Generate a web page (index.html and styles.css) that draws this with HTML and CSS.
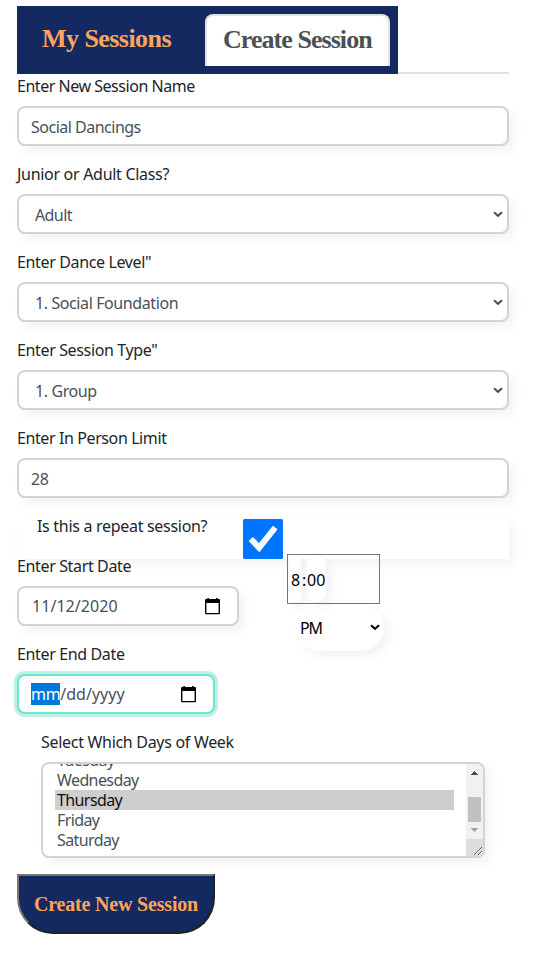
FILE: index.html
```html
<!DOCTYPE html>
<html lang="en">
<head>
<meta charset="utf-8">
<title>Create Session</title>
<link rel="stylesheet" href="styles.css">
</head>
<body>
<nav class="tabs">
  <div class="tab-bar">
    <a class="tab"><span class="tab-text-my">My Sessions</span></a>
    <a class="tab active"><span class="tab-text-create">Create Session</span></a>
  </div>
</nav>
<form>
  <div class="group"><label class="l-name">Enter New Session Name</label><div class="control"><span class="v-name">Social Dancings</span></div></div>
  <div class="group"><label class="l-class">Junior or Adult Class?</label><div class="control select"><span class="v-adult">Adult</span><svg class="chevron" viewBox="0 0 10 7"><path d="M1 1.2 5 4.8 9 1.2"/></svg></div></div>
  <div class="group"><label class="l-level">Enter Dance Level"</label><div class="control select"><span class="v-level">1. Social Foundation</span><svg class="chevron" viewBox="0 0 10 7"><path d="M1 1.2 5 4.8 9 1.2"/></svg></div></div>
  <div class="group"><label class="l-type">Enter Session Type"</label><div class="control select"><span class="v-group">1. Group</span><svg class="chevron" viewBox="0 0 10 7"><path d="M1 1.2 5 4.8 9 1.2"/></svg></div></div>
  <div class="group"><label class="l-limit">Enter In Person Limit</label><div class="control"><span class="v-limit">28</span></div></div>
  <div class="repeat">
    <label class="l-repeat">Is this a repeat session?</label>
    <div class="check-strip"><svg class="checkbox" viewBox="0 0 40 40"><rect width="40" height="40" rx="1.5" fill="#0075ff"/><path d="M7.8 20 16.2 28.7 32.2 8.5" fill="none" stroke="#fff" stroke-width="6"/></svg></div>
  </div>
  <div class="schedule">
    <div class="dates">
      <div class="group"><label class="l-start">Enter Start Date</label><div class="control date start"><span class="v-start">11/12/2020</span><svg class="calendar" viewBox="0 0 16 18"><path fill="#000" fill-rule="evenodd" d="M2.3 1h1.6v1h7.2V1h1.6v1H14q1 0 1 1v13q0 1.3-1 1.3H1q-1 0-1-1.3V3q0-1 1-1h1.3zM1.4 6v9.9h12.2V6z"/></svg></div></div>
      <div class="group"><label class="l-end">Enter End Date</label><div class="control date end"><span class="v-end"><mark>mm</mark>/dd/yyyy</span><svg class="calendar" viewBox="0 0 16 18"><path fill="#000" fill-rule="evenodd" d="M2.3 1h1.6v1h7.2V1h1.6v1H14q1 0 1 1v13q0 1.3-1 1.3H1q-1 0-1-1.3V3q0-1 1-1h1.3zM1.4 6v9.9h12.2V6z"/></svg></div></div>
    </div>
    <div class="time">
      <div class="clock"><span class="hour">8</span><span class="colon">:</span><span class="minute">00</span></div>
      <div class="meridiem"><span>PM</span><svg class="chevron" viewBox="0 0 10 7"><path d="M1 1.2 5 4.8 9 1.2"/></svg></div>
    </div>
  </div>
  <div class="days">
    <label class="l-days">Select Which Days of Week</label>
    <div class="listbox">
      <ul class="options">
        <li class="d-tue">Tuesday</li><li class="d-wed">Wednesday</li><li class="d-thu selected">Thursday</li><li class="d-fri">Friday</li><li class="d-sat">Saturday</li>
      </ul>
      <div class="scrollbar">
        <svg class="arrow up" viewBox="0 0 7 4"><path fill="#505050" d="M3 0h1v1h1v1h1v1h1v1H0V3h1V2h1V1h1z"/></svg>
        <div class="thumb"></div>
        <svg class="arrow down" viewBox="0 0 7 4"><path fill="#a3a3a3" d="M0 0h7v1H6v1H5v1H4v1H3V3H2V2H1V1H0z"/></svg>
        <svg class="resizer" viewBox="0 0 17 17"><path d="M8 16 16 8M12 16 16 12" stroke="#555" stroke-width="1"/><path d="M9 16 16 9M13 16 16 13" stroke="#fff" stroke-width=".8"/></svg>
      </div>
    </div>
  </div>
  <button class="submit" type="button"><span class="submit-text">Create New Session</span></button>
</form>
</body>
</html>
```
FILE: styles.css
```css
* { box-sizing: border-box; }
body {
  margin: 0;
  padding: 6px 25px 0 17px;
  background: #fff;
  color: #212529;
  font: 16px/24px "Noto Sans", sans-serif;
  letter-spacing: -.3px;
}
.tabs { display: flex; height: 68px; align-items: stretch; background: linear-gradient(#dee2e6, #dee2e6) 0 66px / 100% 2px no-repeat; }
.tab-bar { display: flex; width: 381px; padding: 8px; background: #14295f; }
.tab {
  display: flex; align-items: center;
  width: 180px; height: 52px; padding: 0 0 2px 17px;
  color: #ffa45c; white-space: nowrap;
  font: bold 26px/30px "Liberation Serif", serif;
  letter-spacing: -.55px;
}
.tab.active { width: 185px; padding-left: 16px; color: #495057; background: #fff; border: 2px solid #dee2e6; border-bottom: 0; border-radius: 8px 8px 0 0; letter-spacing: -.95px; }
.group { margin-bottom: 16px; }
label { display: block; width: max-content; margin-bottom: 8px; white-space: nowrap; }
.l-name { letter-spacing: -.47px; }
.l-level, .l-type, .l-start, .l-end { letter-spacing: -.36px; }
.l-limit { letter-spacing: -.4px; }
.control {
  display: flex; align-items: center; height: 40px; padding: 2px 12px 0;
  color: #495057; background: #fff;
  border: 2px solid #ced4da; border-radius: 8px;
  box-shadow: 5px 5px 10px rgba(0, 0, 0, .05);
}
.v-name { letter-spacing: -.5px; }
.v-adult { letter-spacing: -.6px; }
.v-level, .v-group { letter-spacing: -.4px; }
.v-start { letter-spacing: .05px; }
.v-end { letter-spacing: 0; }
.select { justify-content: space-between; padding: 2px 4px 0 16px; }
.chevron { width: 10px; height: 7px; fill: none; stroke: currentColor; stroke-width: 2; }
.select .chevron { margin-top: -1px; }
.repeat { height: 40px; position: relative; }
.repeat label { position: absolute; left: 20px; top: 0; }
.check-strip { height: 40px; transform: translateY(5px); box-shadow: 5px 5px 10px rgba(0, 0, 0, .05); }
.checkbox { display: block; width: 40px; height: 40px; margin-left: 226px; }
.schedule { display: flex; height: 176px; position: relative; }
.dates { width: 270px; }
.date { justify-content: space-between; padding: 0 16px 0 13px; }
.start { width: 222px; }
.end { width: 198px; padding-left: 12px; border-color: #66e9cd; box-shadow: 0 0 0 3px #c3eee4; }
.calendar { width: 16px; height: 18px; margin-top: 0; }
mark { background: #0078d7; color: #fff; letter-spacing: -.3px; }
.clock { display: flex; align-items: center; width: 93px; height: 50px; padding-left: 1px; border: 1px solid #767676; color: #000; letter-spacing: 0; }
.hour { width: 12px; height: 46px; padding: 12px 0 0 2px; background: #fff; border-radius: 0 3px 3px 0; box-shadow: 5px 5px 10px rgba(0, 0, 0, .05); }
.colon { width: 6px; padding: 2px 0 0 1px; }
.minute { width: 19px; height: 46px; padding-top: 12px; background: #fff; border-radius: 9px; box-shadow: 5px 5px 10px rgba(0, 0, 0, .05); }
.meridiem { display: flex; align-items: center; justify-content: space-between; width: 88px; height: 46px; margin: 1px 0 0 9px; padding: 0 4px; border-radius: 23px; color: #000; background: #fff; box-shadow: 5px 5px 10px rgba(0, 0, 0, .05); }
.meridiem span { letter-spacing: -1.2px; }
.meridiem .chevron { margin-top: -1px; }
.days { width: 444px; margin: 0 0 16px 24px; }
.listbox { display: flex; height: 96px; overflow: hidden; border: 2px solid #ced4da; border-radius: 8px; box-shadow: 5px 5px 10px rgba(0, 0, 0, .05); }
.options { flex: 1; margin: -14px 12px 0; padding: 0; list-style: none; color: #495057; line-height: 20px; letter-spacing: -.6px; }
.options li { height: 20px; padding-left: 2px; }
.options .selected { background: #cecece; color: #101010; }
.scrollbar { display: flex; flex-direction: column; align-items: center; width: 17px; background: #f1f1f1; }
.arrow { width: 7px; height: 4px; flex: none; }
.up { margin-top: 7px; }
.thumb { width: 13px; height: 25px; margin-top: 22px; background: #c1c1c1; }
.down { margin-top: 6px; }
.resizer { width: 17px; height: 17px; margin-top: auto; background: #dcdcdc; }
.submit {
  display: flex; align-items: center; justify-content: center;
  width: 198px; height: 60px; padding: 0;
  color: #ffa45c; background: #14295f;
  border: 2px solid; border-color: #767676 #212121 #212121 #767676;
  border-radius: 0 0 36px 36px;
  font: bold 20px/24px "Liberation Serif", serif;
  letter-spacing: -.18px;
  white-space: nowrap;
}
```
